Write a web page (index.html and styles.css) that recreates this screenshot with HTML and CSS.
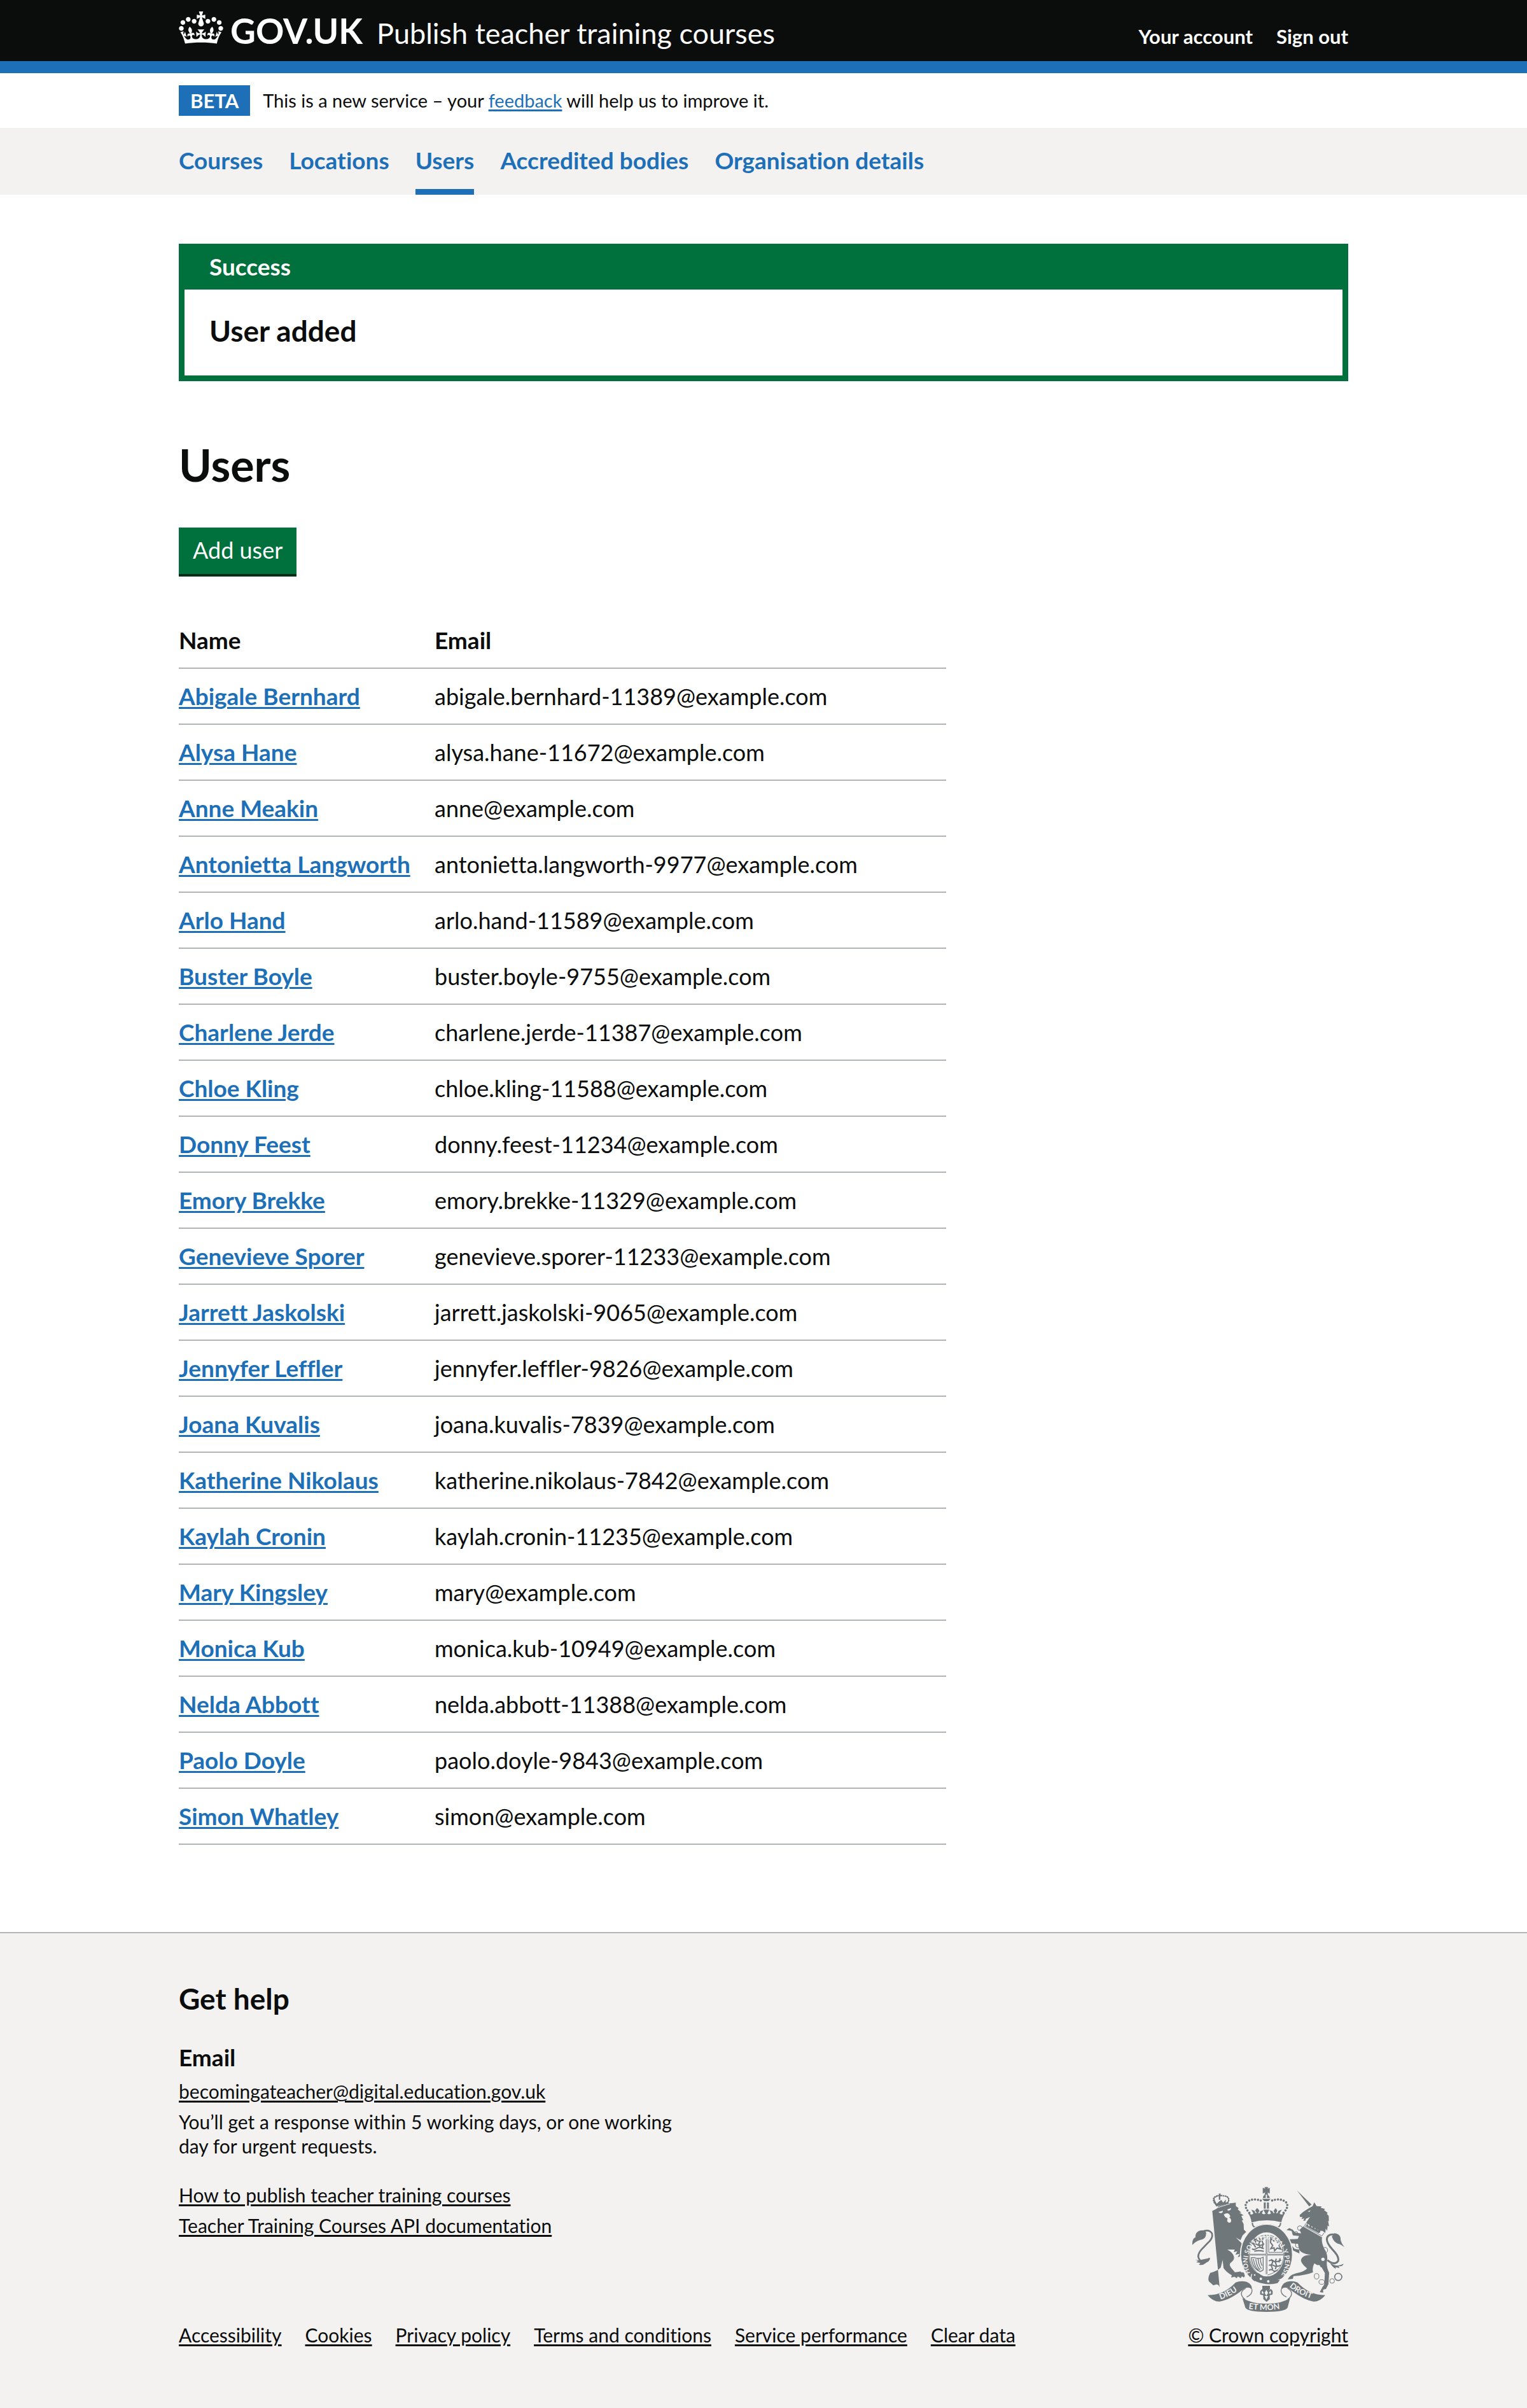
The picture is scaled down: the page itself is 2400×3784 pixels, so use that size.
FILE: index.html
```
<!DOCTYPE html>
<html lang="en">
<head>
<meta charset="utf-8">
<meta name="viewport" content="width=device-width, initial-scale=1">
<title>Users - Publish teacher training courses - GOV.UK</title>
<link rel="stylesheet" href="styles.css">
</head>
<body>
<header class="header">
  <div class="container header-row">
    <a class="logo" href="#">
      <svg class="crown" viewBox="0 0 132 97" aria-hidden="true"><path fill="currentColor" fill-rule="evenodd" d="M25 30.2c3.5 1.5 7.7-.2 9.1-3.7 1.5-3.6-.2-7.8-3.9-9.2-3.6-1.4-7.6.3-9.1 3.9-1.4 3.5.3 7.5 3.9 9zM9 39.5c3.6 1.5 7.8-.2 9.2-3.7 1.5-3.6-.2-7.8-3.9-9.1-3.6-1.5-7.6.2-9.1 3.8-1.4 3.5.3 7.5 3.8 9zM4.4 57.2c3.5 1.5 7.7-.2 9.1-3.8 1.5-3.6-.2-7.7-3.9-9.1-3.5-1.5-7.6.3-9.1 3.8-1.4 3.5.3 7.6 3.9 9.1zm38.3-21.4c3.5 1.5 7.7-.2 9.1-3.8 1.5-3.6-.2-7.7-3.9-9.1-3.6-1.5-7.6.3-9.1 3.8-1.3 3.6.4 7.7 3.9 9.1zm64.4-5.6c-3.6 1.5-7.8-.2-9.1-3.7-1.5-3.6.2-7.8 3.8-9.2 3.6-1.4 7.7.3 9.2 3.9 1.3 3.5-.4 7.5-3.9 9zm15.9 9.3c-3.6 1.5-7.7-.2-9.1-3.7-1.5-3.6.2-7.8 3.7-9.1 3.6-1.5 7.7.2 9.2 3.8 1.5 3.5-.3 7.5-3.8 9zm4.7 17.7c-3.6 1.5-7.8-.2-9.2-3.8-1.5-3.6.2-7.7 3.9-9.1 3.6-1.5 7.7.3 9.2 3.8 1.3 3.5-.4 7.6-3.9 9.1zM89.3 35.8c-3.6 1.5-7.8-.2-9.2-3.8-1.4-3.6.2-7.7 3.9-9.1 3.6-1.5 7.7.3 9.2 3.8 1.4 3.6-.3 7.7-3.9 9.1zM69.7 17.7l8.9 4.7V9.3l-8.9 2.8c-.2-.3-.5-.6-.9-.9L72.4 0H59.6l3.5 11.2c-.3.3-.6.5-.9.9l-8.8-2.8v13.1l8.8-4.7c.3.3.6.7.9.9l-5 15.4v.1c-.2.8-.4 1.6-.4 2.4 0 4.1 3.1 7.5 7 8.1h.2c.3 0 .7.1 1 .1.4 0 .7 0 1-.1h.2c4-.6 7.1-4.1 7.1-8.1 0-.8-.1-1.7-.4-2.4V34l-5.1-15.4c.4-.2.7-.6 1-.9zM66 92.8c16.9 0 32.8 1.1 47.1 3.2 4-16.9 8.9-26.7 14-33.5l-9.6-3.4c1 4.9 1.1 7.2 0 10.2-1.5-1.4-3-4.3-4.2-8.7L108.6 76c2.8-2 5-3.2 7.5-3.3-4.4 9.4-10 11.9-13.6 11.2-4.3-.8-6.3-4.6-5.6-7.9 1-4.7 5.7-5.9 8-.5 4.3-8.7-3-11.4-7.6-8.8 7.1-7.2 7.9-13.5 2.1-21.1-8 6.1-8.1 12.3-4.5 20.8-4.7-5.4-12.1-2.5-9.5 6.2 3.4-5.2 7.9-2 7.2 3.1-.6 4.3-6.4 7.8-13.5 7.2-10.3-.9-10.9-8-11.2-13.8 2.5-.5 7.1 1.8 11 7.3L80.2 60c-4.1 4.4-8 5.3-12.3 5.4 1.4-4.4 8-11.6 8-11.6H55.5s6.4 7.2 7.9 11.6c-4.2-.1-8-1-12.3-5.4l1.4 16.4c3.9-5.5 8.5-7.7 10.9-7.3-.3 5.8-.9 12.8-11.1 13.8-7.2.6-12.9-2.9-13.5-7.2-.7-5 3.8-8.3 7.1-3.1 2.7-8.7-4.6-11.6-9.4-6.2 3.7-8.5 3.6-14.7-4.6-20.8-5.8 7.6-5 13.9 2.2 21.1-4.7-2.6-11.9.1-7.7 8.8 2.3-5.5 7.1-4.2 8.1.5.7 3.3-1.3 7.1-5.7 7.9-3.5.7-9-1.8-13.5-11.2 2.5.1 4.7 1.3 7.5 3.3l-4.7-15.4c-1.2 4.4-2.7 7.2-4.3 8.7-1.1-3-.9-5.3 0-10.2l-9.5 3.4c5 6.9 9.9 16.7 14 33.5 14.8-2.1 30.8-3.2 47.7-3.2z"/></svg>
      <span>GOV.UK</span>
    </a>
    <a class="service-name" href="#">Publish teacher training courses</a>
    <nav class="account" aria-label="Account">
      <a href="#">Your account</a>
      <a href="#">Sign out</a>
    </nav>
  </div>
</header>

<div class="container phase">
  <strong class="tag">BETA</strong>
  <span>This is a new service – your <a class="link" href="#">feedback</a> will help us to improve it.</span>
</div>

<nav class="primary-nav" aria-label="Primary">
  <ul class="container nav-list">
    <li><a href="#">Courses</a></li>
    <li><a href="#">Locations</a></li>
    <li><a href="#" aria-current="page">Users</a></li>
    <li><a href="#">Accredited bodies</a></li>
    <li><a href="#">Organisation details</a></li>
  </ul>
</nav>

<main class="container main">
  <section class="banner" role="alert" aria-labelledby="banner-title">
    <h2 class="banner-title" id="banner-title">Success</h2>
    <p class="banner-text">User added</p>
  </section>

  <h1 class="page-title">Users</h1>
  <button class="button" type="button">Add user</button>

  <table class="users">
    <thead>
      <tr><th class="name-col" scope="col">Name</th><th scope="col">Email</th></tr>
    </thead>
    <tbody>
      <tr><th scope="row"><a class="link" href="#">Abigale Bernhard</a></th><td>abigale.bernhard-11389@example.com</td></tr>
      <tr><th scope="row"><a class="link" href="#">Alysa Hane</a></th><td>alysa.hane-11672@example.com</td></tr>
      <tr><th scope="row"><a class="link" href="#">Anne Meakin</a></th><td>anne@example.com</td></tr>
      <tr><th scope="row"><a class="link" href="#">Antonietta Langworth</a></th><td>antonietta.langworth-9977@example.com</td></tr>
      <tr><th scope="row"><a class="link" href="#">Arlo Hand</a></th><td>arlo.hand-11589@example.com</td></tr>
      <tr><th scope="row"><a class="link" href="#">Buster Boyle</a></th><td>buster.boyle-9755@example.com</td></tr>
      <tr><th scope="row"><a class="link" href="#">Charlene Jerde</a></th><td>charlene.jerde-11387@example.com</td></tr>
      <tr><th scope="row"><a class="link" href="#">Chloe Kling</a></th><td>chloe.kling-11588@example.com</td></tr>
      <tr><th scope="row"><a class="link" href="#">Donny Feest</a></th><td>donny.feest-11234@example.com</td></tr>
      <tr><th scope="row"><a class="link" href="#">Emory Brekke</a></th><td>emory.brekke-11329@example.com</td></tr>
      <tr><th scope="row"><a class="link" href="#">Genevieve Sporer</a></th><td>genevieve.sporer-11233@example.com</td></tr>
      <tr><th scope="row"><a class="link" href="#">Jarrett Jaskolski</a></th><td>jarrett.jaskolski-9065@example.com</td></tr>
      <tr><th scope="row"><a class="link" href="#">Jennyfer Leffler</a></th><td>jennyfer.leffler-9826@example.com</td></tr>
      <tr><th scope="row"><a class="link" href="#">Joana Kuvalis</a></th><td>joana.kuvalis-7839@example.com</td></tr>
      <tr><th scope="row"><a class="link" href="#">Katherine Nikolaus</a></th><td>katherine.nikolaus-7842@example.com</td></tr>
      <tr><th scope="row"><a class="link" href="#">Kaylah Cronin</a></th><td>kaylah.cronin-11235@example.com</td></tr>
      <tr><th scope="row"><a class="link" href="#">Mary Kingsley</a></th><td>mary@example.com</td></tr>
      <tr><th scope="row"><a class="link" href="#">Monica Kub</a></th><td>monica.kub-10949@example.com</td></tr>
      <tr><th scope="row"><a class="link" href="#">Nelda Abbott</a></th><td>nelda.abbott-11388@example.com</td></tr>
      <tr><th scope="row"><a class="link" href="#">Paolo Doyle</a></th><td>paolo.doyle-9843@example.com</td></tr>
      <tr><th scope="row"><a class="link" href="#">Simon Whatley</a></th><td>simon@example.com</td></tr>
    </tbody>
  </table>
</main>

<footer class="footer">
  <div class="container footer-row">
    <div class="footer-main">
      <h2 class="footer-title">Get help</h2>
      <h3 class="footer-subtitle">Email</h3>
      <ul class="footer-list">
        <li><a href="#">becomingateacher@digital.education.gov.uk</a></li>
        <li>You’ll get a response within 5 working days, or one working day for urgent requests.</li>
      </ul>
      <ul class="footer-list">
        <li><a href="#">How to publish teacher training courses</a></li>
        <li><a href="#">Teacher Training Courses API documentation</a></li>
      </ul>
      <ul class="footer-links">
        <li><a href="#">Accessibility</a></li>
        <li><a href="#">Cookies</a></li>
        <li><a href="#">Privacy policy</a></li>
        <li><a href="#">Terms and conditions</a></li>
        <li><a href="#">Service performance</a></li>
        <li><a href="#">Clear data</a></li>
      </ul>
    </div>
    <a class="copyright" href="#">
      <svg class="crest" viewBox="100 102 720 594" aria-hidden="true">
        <defs>
          <path id="garter" d="M378 513A88 105 0 1 1 526 513"/>
          <path id="scroll-left" d="M236 634Q290 618 345 570"/>
          <path id="scroll-mid" d="M368 678Q452 692 540 675"/>
          <path id="scroll-right" d="M560 574Q610 618 690 637"/>
        </defs>
        <!-- lion -->
        <g class="crest-fill">
          <path d="M197 217L216 208 226 195 279 180 284 181 308 178 308 194 322 204 317 209 334 225 325 225 345 238 334 240 343 261 336 262 345 279 346 305 357 316 340 332 330 355 309 343 332 366 349 384 359 406 366 445 357 437 353 447 340 436 331 444 329 431 317 435 325 419 306 424 315 407 298 411 303 399 268 399Q295 414 299 432Q303 448 284 461Q274 470 286 485L304 506 321 504Q330 500 335 507Q348 504 348 516Q354 522 346 531L337 525 331 534 318 526 312 534 302 527 286 531 289 520Q263 506 250 486L246 448 237 484Q223 500 187 509Q174 534 181 549L202 568 217 563Q230 564 232 579 228 586L219 581 211 592 202 588 194 599 184 591 178 602 161 604 166 593 159 592 160 577 139 567 146 560 137 548 144 540 139 526 150 514 147 506 160 507Q176 495 180 464Q188 436 213 409L216 370 235 332 234 299 222 318 222 290 210 294 217 270 203 265 212 251 204 240 211 228 197 233Z"/>
          <path d="M103 377Q101 347 118 341Q115 319 138 310Q157 305 168 318Q171 350 139 354Q119 360 103 377ZM117 446Q132 452 149 446L186 439Q185 455 170 460Q151 477 134 470L141 462 121 459 130 454Z"/>
          <path d="M204 177Q196 151 220 147L216 153Q204 153 210 169L218 183 230 172 240 165 248 178 262 163 260 178 269 174Q277 157 265 152L261 145Q281 151 274 174L274 183 216 196Z"/>
          <path d="M228 135h9l-2 8 8-3v8l-8-2v18h-7v-17l-7 3v-9l7 3Z"/>
        </g>
        <path class="crest-line" stroke-width="8" d="M148 315Q183 300 196 324Q202 346 174 370L145 400Q117 434 145 454Q164 462 184 440"/>
        <g fill="none" stroke="#6f777b" stroke-width="7" stroke-dasharray="1 9" stroke-linecap="round"><path d="M207 178Q192 150 226 145M238 145Q283 145 273 175"/></g>
        <path class="crest-gap" d="M226 222l22 -6-4 10q-12 4-18-4ZM268 210l18-7q-1 13-16 12ZM251 234q13-10 24-4l8 12-6 5q14 12 7 23-10 8-17-5l2-13-11-6Z"/>
        <path d="M215 204L280 183" stroke="#f3f2f1" stroke-width="3"/>
        <!-- unicorn -->
        <g class="crest-fill">
          <path d="M596 120L665 187 654 196ZM609 236L626 221 648 207 670 194 678 176 689 194 713 196 708 202 729 208 724 213 741 226 737 231 746 240 747 266 743 263 748 290 741 286 739 311 732 300 730 321 717 311 682 308 637 283 641 271 651 255 658 245 637 255 638 262 626 264 631 252 618 256 622 245 611 246Z"/>
          <path d="M632 285L652 304 716 336Q709 360 724 393Q742 420 739 448Q732 475 748 508L745 562 733 585 720 588 720 602 704 600 716 577 725 564 728 510 713 484 678 464Q667 484 672 506Q640 520 580 524L577 537 553 540Q564 515 606 508Q635 499 644 488Q618 468 615 450Q620 425 663 424Q615 420 606 397L601 372 562 369 586 396 607 399 608 418 589 409 576 402 552 368 557 351 600 349 606 335 577 332 571 311 547 307 560 298 576 305 588 319 616 323 609 305Z"/>
          <path d="M761 338L772 322Q798 324 802 345Q800 362 820 388Q800 372 789 371Q770 364 761 338ZM752 462Q787 485 816 466Q812 481 792 477L797 486 778 482 780 490Q763 482 752 462Z"/>
        </g>
        <path class="crest-line" stroke-width="9" d="M780 330Q745 322 738 345Q733 364 762 397Q800 435 789 455Q772 475 740 449"/>
        <path class="crest-gap" d="M636 272L728 323 716 342 628 292Z"/>
        <path class="crest-line" stroke-width="3" d="M637 276L633 289 714 335 724 320"/>
        <path class="crest-fill" d="M638 289l6-13 9 16 7-17 7 23 9-19 5 25 12-17 1 22 14-14-2 22-7 5Z"/>
        <path class="crest-gap" d="M647 219l13-5 -4 7Z"/>
        <g class="crest-line" stroke-width="3">
          <ellipse cx="610" cy="298" rx="11" ry="11"/><ellipse cx="592" cy="323" rx="8" ry="9"/><ellipse cx="600" cy="378" rx="11" ry="12"/>
          <ellipse cx="729" cy="402" rx="12" ry="13"/><ellipse cx="689" cy="525" rx="11" ry="13"/><ellipse cx="713" cy="552" rx="13" ry="11"/>
          <ellipse cx="762" cy="547" rx="11" ry="11"/><ellipse cx="791" cy="528" rx="17" ry="17" stroke-width="5"/>
        </g>
        <g class="crest-gap"><circle cx="719" cy="445" r="8"/><circle cx="698" cy="480" r="8"/></g>
        <!-- crown -->
        <g class="crest-fill">
          <path d="M435 108L447 112 443 104H461L457 112 468 108V135L457 130 461 140H443L447 130 435 135ZM436 156Q436 142 449 140V156ZM455 140Q467 143 468 156H455ZM432 160H472L462 171H442Z"/>
          <path d="M440 177H449V206H440ZM455 177H464V206H455ZM364 225Q382 240 391 229L381 211 397 217Q398 230 407 226L399 216 404 208 409 203 415 210 420 217 413 227Q421 230 423 218L438 213 431 229Q439 235 448 230L438 211H466L457 230Q466 235 474 229L467 213 481 218Q484 230 491 226L486 217 496 203 504 216 498 227Q506 231 509 217L525 211 514 229Q525 240 541 225Q526 250 523 270Q453 252 382 271Q380 246 364 225Z"/>
          <path d="M433 570H469V585L463 594 472 585Q486 590 481 611L468 614 468 633 453 646 438 633 437 614 423 611Q419 590 435 585L442 594 433 585Z"/>
        </g>
        <path class="crest-line" stroke-width="11" stroke-linecap="round" stroke-dasharray="0 14" d="M372 226Q343 195 361 175Q388 153 434 171M533 226Q562 195 544 175Q517 153 470 171"/>
        <path class="crest-gap" d="M452 589l8 14-8 14-8-14ZM431 593q9 5 8 14h-9ZM473 593q-9 5-8 14h9ZM444 618h16l-8 18Z"/>
        <path class="crest-line" stroke-width="6" d="M386 273Q386 292 401 294Q452 270 505 294Q519 291 519 273"/>
        <!-- garter and shield -->
        <ellipse class="crest-gap" cx="453" cy="422" rx="126" ry="144"/>
        <ellipse cx="453" cy="422" rx="102" ry="122" fill="none" stroke="#6f777b" stroke-width="36"/>
        <path class="crest-line" stroke-width="3" d="M454 331Q377 334 371 423Q376 478 406 506M454 331Q528 334 535 423Q531 500 458 519"/>
        <path class="crest-line" stroke-width="7" d="M453 330V515M369 423H537"/>
        <path stroke="#f3f2f1" stroke-width="2" d="M453 330V515M369 423H537"/>
        <g class="crest-line" stroke-width="6">
          <path d="M388 355q12-9 20 0t20-4 16-5M381 374q14-9 26 1t35-3M384 395q10 8 23-2t33 2M395 407q20-6 45 0M392 346l10 16-10 12 10 15M418 344l6 14-8 14 8 18M437 343l-5 16 5 14-6 22"/>
          <path d="M464 453q13-9 22 0t36-4M464 474q12-7 24 1t32-2M464 497q14-7 20 1t22-3M476 444l6 14-7 16 7 18M499 442l-5 16 6 16-6 18M517 440l-5 20"/>
          <path d="M473 347l15 12 8-10 8 17 14 3-6 12 9 16-18-5-12 13-3-14-15 4 9-15-10-14Z"/>
          <path stroke-width="3" d="M463 339v73h65V393Q517 348 463 339Z"/>
          <path stroke-width="4" d="M382 437h12q22 9 43-2v60l-14 8Q385 489 382 437ZM391 443q5 38 25 54M402 444q4 34 20 51M413 443q2 30 16 47M424 442q0 18 8 33"/>
        </g>
        <path class="crest-gap" d="M382 513Q455 568 534 532L520 555Q450 590 374 540Z"/>
        <path class="crest-fill" d="M384 536Q382 510 400 505L419 514Q457 541 516 542L505 557Q456 571 402 549Z"/>
        <path class="crest-line" stroke-width="4" d="M396 546Q377 535 389 513Q403 502 419 515L409 536Z"/>
        <g class="crest-gap"><circle cx="426" cy="537" r="6"/><circle cx="461" cy="549" r="6"/><circle cx="397" cy="519" r="4"/></g>
        <!-- motto scroll -->
        <g class="crest-fill">
          <path d="M175 614Q253 613 307 554Q332 544 359 551Q386 562 384 588L374 580Q359 574 341 588Q280 637 232 644Q201 645 175 614Z"/>
          <path d="M730 614Q653 613 599 554Q574 544 548 551Q521 562 522 588L532 580Q547 574 565 588Q626 637 674 644Q705 645 730 614Z"/>
          <path d="M339 628Q389 657 453 654Q520 656 564 628L552 673Q542 693 453 693Q363 693 353 673Z"/>
        </g>
        <path class="crest-line" stroke-width="4" d="M384 586Q389 609 359 623M354 582Q334 593 334 608Q337 625 352 633M522 586Q517 609 547 623M552 582Q572 593 571 608Q568 625 553 633"/>
        <g class="crest-text">
          <text><textPath href="#garter" startOffset="4">HONI SOIT QUI MAL Y PENSE</textPath></text>
          <text class="crest-motto"><textPath href="#scroll-left">DIEU</textPath></text>
          <text class="crest-motto"><textPath href="#scroll-mid">ET MON</textPath></text>
          <text class="crest-motto"><textPath href="#scroll-right">DROIT</textPath></text>
        </g>
      </svg>
      <span>© Crown copyright</span>
    </a>
  </div>
</footer>
</body>
</html>
```
FILE: styles.css
```
:root {
  --ink: #0b0c0c;
  --blue: #1d70b8;
  --green: #00703c;
  --grey: #f3f2f1;
  --line: #b1b4b6;
  --crest: #6f777b;
}

* { box-sizing: border-box; }

body {
  margin: 0;
  background: #fff;
  color: var(--ink);
  font: 36px/48px Lato, "Liberation Sans", sans-serif;
  font-variant-ligatures: none;
}

h1, h2, h3, p, ul { margin: 0; padding: 0; }
ul { list-style: none; }

.container {
  width: calc(100% - 60px);
  max-width: 1838px;
  margin: 0 auto;
}

.link {
  color: var(--blue);
  text-decoration-thickness: 3px;
  text-underline-offset: 3px;
}

/* Header */
.header {
  background: var(--ink);
  border-bottom: 19px solid var(--blue);
}
.header-row {
  display: flex;
  align-items: baseline;
  padding: 18px 0 20px;
  line-height: 38px;
}
.header a { color: #fff; text-decoration: none; }
.logo {
  display: flex;
  align-items: baseline;
  gap: 11px;
  font-size: 55px;
  line-height: 56px;
  font-weight: 700;
}
.crown { width: 70px; height: 51px; margin-bottom: -3px; }
.service-name { margin-left: 22px; font-size: 45px; }
.account {
  display: flex;
  gap: 37px;
  margin-left: auto;
  font-size: 31px;
  font-weight: 700;
}

/* Phase banner */
.phase {
  display: flex;
  align-items: center;
  gap: 20px;
  padding-top: 19px;
  padding-bottom: 19px;
  font-size: 29px;
}
.tag {
  padding: 0 18px;
  background: var(--blue);
  color: #fff;
  font-size: 31px;
}

/* Primary navigation */
.primary-nav { background: var(--grey); }
.nav-list { display: flex; flex-wrap: wrap; gap: 0 41px; }
.nav-list a {
  display: block;
  padding: 27px 0 21px;
  border-bottom: 9px solid transparent;
  color: var(--blue);
  font-size: 37px;
  font-weight: 700;
  text-decoration: none;
}
.nav-list a[aria-current] { border-color: var(--blue); }

/* Content */
.main { padding: 77px 0 137px; }
.banner { border: 9px solid var(--green); }
.banner-title {
  padding: 7px 39px 16px;
  background: var(--green);
  color: #fff;
  font-size: 37px;
  line-height: 40px;
}
.banner-text {
  padding: 37px 39px 42px;
  font-size: 46px;
  font-weight: 700;
  line-height: 56px;
}
.page-title {
  margin: 93px 0 61px;
  font-size: 70px;
  line-height: 76px;
}
.button {
  display: block;
  margin: 0 0 61px;
  padding: 11px 22px 14px;
  border: 0;
  background: var(--green);
  box-shadow: 0 4px 0 #002d18;
  color: #fff;
  font: inherit;
}
.users {
  width: 66%;
  max-width: 1206px;
  border-collapse: separate;
  border-spacing: 0;
  table-layout: fixed;
}
.users th, .users td {
  padding: 19px 0;
  border-bottom: 2px solid var(--line);
  text-align: left;
}
.users th { font-size: 37px; }
.users .name-col { width: calc(100% / 3); }

/* Footer */
.footer {
  border-top: 2px solid var(--line);
  background: var(--grey);
  font-size: 30px;
  line-height: 38px;
}
.footer-row {
  display: flex;
  align-items: flex-end;
  justify-content: space-between;
  padding: 75px 0 97px;
}
.footer a {
  color: var(--ink);
  text-decoration-thickness: 3px;
  text-underline-offset: 3px;
}
.footer-title { margin-bottom: 40px; font-size: 46px; line-height: 56px; }
.footer-subtitle { margin-bottom: 10px; font-size: 37px; line-height: 48px; }
.footer-list {
  display: grid;
  gap: 10px;
  max-width: 800px;
  margin-bottom: 39px;
}
.footer-links {
  display: flex;
  flex-wrap: wrap;
  gap: 10px 37px;
  margin-top: 134px;
}
.copyright {
  display: grid;
  justify-items: center;
  gap: 16px;
}
.crest { width: 240px; height: 198px; }
.crest-fill { fill: var(--crest); }
.crest-gap { fill: var(--grey); }
.crest-line { fill: none; stroke: var(--crest); }
.crest-text { fill: var(--grey); font: 700 31px Lato, sans-serif; }
.crest-motto { font-size: 38px; }
```
